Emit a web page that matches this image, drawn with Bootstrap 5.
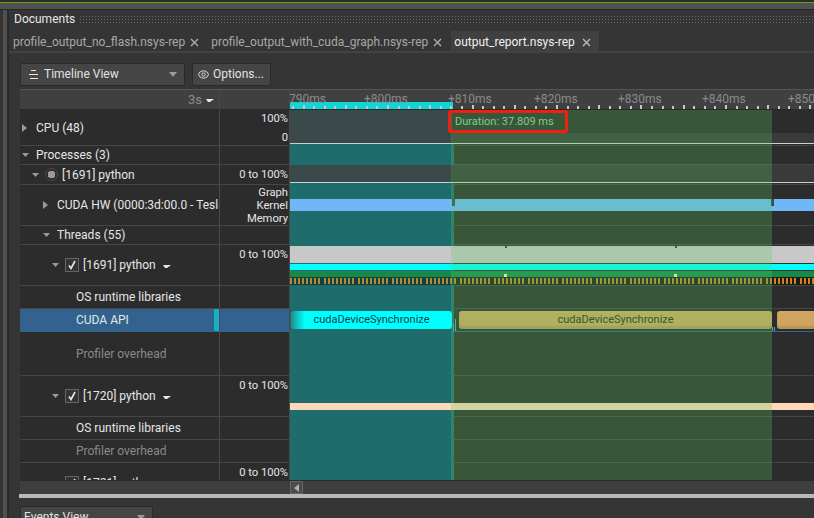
<!DOCTYPE html>
<html lang="en">
<head>
<meta charset="UTF-8">
<title>Timeline View</title>
<link href="https://cdn.jsdelivr.net/npm/bootstrap@5.3.0/dist/css/bootstrap.min.css" rel="stylesheet">
<style>
  html, body { height: 100%; }
  body { background: #353535; color: #e6e6e6; font-family: Roboto, "Liberation Sans", sans-serif; font-size: 12px; line-height: 14px; overflow: hidden; }
  .top-strip { height: 10px; background: #505050; border-top: 2px solid #2c2c2c; border-bottom: 1px solid #262626; position: relative; }
  .top-strip::before { content: ""; display: block; height: 1px; background: #6aa50a; }
  .app-main { height: 508px; overflow: hidden; }
  .left-rail { width: 9px; background: #505050; border-left: 3px solid #333; border-right: 2px solid #2a2a2a; }
  .work-pane { width: 805px; }
  .work-pane > * { flex: none; }
  .doc-title { height: 17px; padding: 0 0 0 5px; }
  .dots { height: 8px; background-image: radial-gradient(circle, #666 .7px, transparent .8px); background-size: 3px 3px; }
  .doc-tabs { height: 22px; margin-top: 4px; padding-left: 4px; border-bottom: 2px solid #424242; flex-wrap: nowrap; }
  .doc-tabs .nav-link { height: 20px; padding: 2px 0 0; color: #a8a8a8; font-size: 12px; display: flex; align-items: center; border: 0; border-radius: 0; white-space: nowrap; }
  .doc-tabs .nav-link.active { background: #404040; color: #f0f0f0; padding-left: 3px; margin-left: -3px; padding-right: 8px; }
  .doc-tabs svg { margin-left: 5px; margin-right: 12px; flex: none; }
  .doc-tabs .active svg { margin-right: 0; margin-left: 7px; }
  .tool-row { height: 36px; padding: 10px 0 0 11px; }
  .dark-btn { height: 23px; padding: 0 7px; background: #454545; border: 1px solid #2a2a2a; border-radius: 2px; color: #e2e2e2; font-size: 12px; line-height: 21px; display: flex; align-items: center; }
  .dark-btn svg { flex: none; }
  .view-combo { width: 165px; }
  .view-combo > svg:first-child { margin-right: 5px; }
  .options-btn { width: 79px; margin-left: 7px; padding: 0 5px; }
  .options-btn svg { margin-right: 4px; }
  .events-combo { width: 133px; height: 23px; margin: 8px 0 0 11px; padding-left: 3px; }
  .tl-wrap { margin-left: 11px; }
  .tl-head { height: 21px; border-top: 1px solid #555; background: #404040; border-bottom: 1px solid #2a2a2a; }
  .c-label { width: 200px; flex: none; border-right: 1px solid #4a4a4a; }
  .c-value { width: 70px; flex: none; border-right: 1px solid #4a4a4a; }
  .c-lane { flex: 1 1 auto; position: relative; overflow: hidden; }
  .ruler { height: 20px; color: #8b8b8b; font-size: 12px; }
  .ruler-tag { position: absolute; top: 2px; white-space: nowrap; }
  .ruler-sel { position: absolute; left: 0; top: 12px; width: 163px; height: 7px; background: #12d6d6; }
  .ruler svg { position: absolute; left: 0; top: 0; }
  .tree { height: 370px; overflow: hidden; position: relative; background: #2a2a2a; }
  .tl-row { border-bottom: 1px solid #464646; }
  .tl-row > .c-label, .tl-row > .c-value { background: #2c2c2c; position: relative; z-index: 5; }
  .tl-row > .c-lane { z-index: 1; background: rgba(255,255,255,.012); }
  .h-19 { height: 19px; } .h-20 { height: 20px; } .h-23 { height: 23px; } .h-36 { height: 36px; } .h-41 { height: 41px; } .h-44 { height: 44px; }
  .c-label { padding-right: 2px; overflow: hidden; white-space: nowrap; display: flex; align-items: center; }
  .c-label.head-3s { color: #8a8a8a; font-size: 13px; padding-right: 5px; justify-content: flex-end; }
  .c-value { padding: 0 1px 0 0; text-align: right; font-size: 11.2px; line-height: 13px; color: #e6e6e6; }
  .val-top { padding-top: 3px; }
  .cpu-vals { padding-top: 2px; }
  .cpu-vals div + div { margin-top: 6px; }
  .in-1 { padding-left: 2px; } .in-2 { padding-left: 12px; } .in-3 { padding-left: 23px; } .in-4 { padding-left: 32px; } .in-leaf { padding-left: 56px; }
  .arrow-box { width: 14px; flex: none; display: flex; }
  .muted-txt { color: #8a8a8a; }
  .radio-dot { width: 13px; height: 13px; border-radius: 50%; border: 1px solid #4c4c4c; background: radial-gradient(circle, #9a9a9a 3.6px, transparent 4px); margin: 0 4px 0 -1px; flex: none; }
  .check-box { width: 14px; height: 14px; border: 1px solid #666; background: #343434; margin: 0 4px 0 -1px; flex: none; display: flex; align-items: center; justify-content: center; }
  .caret-after { margin-left: 7px; }
  .row-picked .c-label, .row-picked .c-value { background: #33628f !important; }
  .row-picked { border-bottom-color: #2f6a8a; }
  .row-mark { position: absolute; left: 194px; top: 0; width: 5px; height: 22px; background: #12afc6; }
  .sel-teal { position: absolute; left: 270px; top: 34px; bottom: 0; width: 164px; background: #1d6b6b; z-index: 0; }
  .sel-green { position: absolute; left: 431px; top: 0; bottom: 0; width: 321px; background: rgba(91,207,98,.266); z-index: 3; }
  .dur-box { position: absolute; left: 428px; top: 0; width: 120px; height: 23px; border: 3px solid #f01f10; border-radius: 2px; z-index: 4; color: #86c98c; font-size: 11px; line-height: 17px; padding-left: 4px; white-space: nowrap; }
  .seg { position: absolute; left: 0; }
  .seg-cpu-l { top: 0; height: 33px; width: 162px; background: #3a4a4b; }
  .seg-cpu-r { top: 23px; height: 10px; right: 0; background: #3a3a3a; }
  .seg-white { top: 33px; height: 1px; right: 0; background: #cfcfcf; }
  .seg-py { top: 0; height: 17px; right: 0; background: #3a3a3a; }
  .seg-py-l { top: 0; height: 17px; width: 162px; background: #3a4a4b; }
  .seg-py-w { top: 17px; height: 1px; right: 0; background: #cfcfcf; }
  .seg-blue { top: 14px; height: 12px; right: 0; background: #6fb7f6; }
  .seg-notch { top: 14px; width: 3px; height: 7px; background: #2e5348; }
  .seg-gray { top: 1px; height: 17px; right: 0; background: #c8c8c8; }
  .seg-cyan { top: 19px; height: 6px; right: 0; background: #00ffff; }
  .seg-green { top: 26px; height: 6px; right: 0; background: #178a47; }
  .seg-tick { top: 1px; left: 215px; width: 2px; height: 2px; background: #3a3a3a; }
  .seg-spot { top: 29px; width: 3px; height: 3px; background: #f2f0c8; }
  .seg-ticks { top: 32px; background: rgba(0,0,0,.4); }
  .seg-peach { top: 27px; height: 7px; right: 0; background: #ffd7ba; }
  .call-box { position: absolute; top: 2px; height: 18px; border-radius: 3px; display: flex; align-items: center; justify-content: center; white-space: nowrap; font-size: 11px; color: #123f4d; overflow: hidden; }
  .call-cyan { left: 1px; width: 161px; background: linear-gradient(90deg, #1e8e8e 0, #00ffff 14px); color: #0b4456; }
  .call-tan { background: #cfa55f; color: #25301c; box-shadow: inset 0 2px 0 rgba(255,255,255,.05), inset 0 -3px 2px rgba(0,0,0,.1); }
  .call-a { left: 169px; width: 313px; }
  .call-b { left: 487px; width: 60px; }
  .spike { position: absolute; width: 1px; bottom: 0; background: #5f98c9; }
  .scroll-row { height: 14px; border-top: 1px solid #2a2a2a; background: #3e3e3e; }
  .scroll-arrow { width: 13px; height: 13px; margin-left: 270px; background: #4a4a4a; border: 1px solid #666; display: flex; align-items: center; justify-content: center; }
  .splitter { height: 4px; background: #b9b9b9; margin-left: 10px; }
</style>
</head>
<body>
<div class="top-strip"></div>
<div class="app-main d-flex">
  <div class="left-rail"></div>
  <div class="work-pane d-flex flex-column">
    <div class="doc-title d-flex align-items-center">
      <span>Documents</span>
      <div class="dots flex-grow-1 ms-1"></div>
    </div>
    <ul class="nav doc-tabs">
      <li class="nav-item"><a class="nav-link" href="#">profile_output_no_flash.nsys-rep<svg width="9" height="9" viewBox="0 0 9 9"><path d="M1 1l7 7M8 1l-7 7" stroke="#b0b0b0" stroke-width="1.3"/></svg></a></li>
      <li class="nav-item"><a class="nav-link" href="#">profile_output_with_cuda_graph.nsys-rep<svg width="9" height="9" viewBox="0 0 9 9"><path d="M1 1l7 7M8 1l-7 7" stroke="#b0b0b0" stroke-width="1.3"/></svg></a></li>
      <li class="nav-item"><a class="nav-link active" href="#">output_report.nsys-rep<svg width="9" height="9" viewBox="0 0 9 9"><path d="M1 1l7 7M8 1l-7 7" stroke="#c0c0c0" stroke-width="1.3"/></svg></a></li>
    </ul>
    <div class="tool-row d-flex">
      <button class="btn dark-btn view-combo" type="button">
        <svg width="11" height="9" viewBox="0 0 11 9"><path d="M3 .5h5M1 4.5h9M2 8.5h8" stroke="#e8e8e8"/></svg>
        <span>Timeline View</span>
        <svg width="8" height="5" viewBox="0 0 8 5" class="ms-auto"><path d="M0 0h8L4 5z" fill="#9a9a9a"/></svg>
      </button>
      <button class="btn dark-btn options-btn" type="button">
        <svg width="11" height="9" viewBox="0 0 11 9"><ellipse cx="5.5" cy="4.5" rx="4.8" ry="3.6" fill="none" stroke="#ddd"/><circle cx="5.5" cy="4.5" r="1.7" fill="none" stroke="#ddd"/></svg>
        <span>Options...</span>
      </button>
    </div>
    <div class="tl-wrap">
      <div class="tl-head d-flex">
        <div class="c-label head-3s">3s<svg class="ms-1" width="8" height="5" viewBox="0 0 8 5"><path d="M0 2h8L4 5H2z" fill="#e8e8e8"/></svg></div>
        <div class="c-value"></div>
        <div class="c-lane ruler" id="ruler">
          <div class="ruler-sel"></div>
          <span class="ruler-tag" style="left:-1px">790ms</span>
          <span class="ruler-tag" style="left:74px">+800ms</span>
          <span class="ruler-tag" style="left:158px">+810ms</span>
          <span class="ruler-tag" style="left:244px">+820ms</span>
          <span class="ruler-tag" style="left:328px">+830ms</span>
          <span class="ruler-tag" style="left:412px">+840ms</span>
          <span class="ruler-tag" style="left:498px">+850ms</span>
          <svg id="rulerTicks" width="524" height="20"></svg>
        </div>
      </div>
      <div class="tree">
        <div class="sel-teal"></div>
        <div class="sel-green"></div>
        <div class="dur-box">Duration: 37.809 ms</div>

        <div class="tl-row h-36 d-flex">
          <div class="c-label in-1"><span class="arrow-box"><svg width="5" height="8" viewBox="0 0 5 8"><path d="M0 0l5 4-5 4z" fill="#9a9a9a"/></svg></span>CPU (48)</div>
          <div class="c-value cpu-vals"><div>100%</div><div>0</div></div>
          <div class="c-lane"><div class="seg seg-cpu-r"></div><div class="seg seg-cpu-l"></div><div class="seg seg-white"></div></div>
        </div>
        <div class="tl-row h-19 d-flex">
          <div class="c-label in-1"><span class="arrow-box"><svg width="7" height="4" viewBox="0 0 7 4"><path d="M0 0h7L3.5 4z" fill="#9a9a9a"/></svg></span>Processes (3)</div>
          <div class="c-value"></div><div class="c-lane"></div>
        </div>
        <div class="tl-row h-20 d-flex">
          <div class="c-label in-2"><span class="arrow-box"><svg width="7" height="4" viewBox="0 0 7 4"><path d="M0 0h7L3.5 4z" fill="#9a9a9a"/></svg></span><span class="radio-dot"></span>[1691] python</div>
          <div class="c-value d-flex align-items-center justify-content-end">0 to 100%</div>
          <div class="c-lane"><div class="seg seg-py"></div><div class="seg seg-py-l"></div><div class="seg seg-py-w"></div></div>
        </div>
        <div class="tl-row h-41 d-flex">
          <div class="c-label in-3"><span class="arrow-box"><svg width="5" height="8" viewBox="0 0 5 8"><path d="M0 0l5 4-5 4z" fill="#9a9a9a"/></svg></span>CUDA HW (0000:3d:00.0 - Tesla</div>
          <div class="c-value d-flex flex-column justify-content-center"><div>Graph</div><div>Kernel</div><div>Memory</div></div>
          <div class="c-lane"><div class="seg seg-blue"></div><div class="seg seg-notch" style="left:162px"></div><div class="seg seg-notch" style="left:481px"></div></div>
        </div>
        <div class="tl-row h-19 d-flex">
          <div class="c-label in-3"><span class="arrow-box"><svg width="7" height="4" viewBox="0 0 7 4"><path d="M0 0h7L3.5 4z" fill="#9a9a9a"/></svg></span>Threads (55)</div>
          <div class="c-value"></div><div class="c-lane"></div>
        </div>
        <div class="tl-row h-41 d-flex">
          <div class="c-label in-4"><span class="arrow-box"><svg width="7" height="4" viewBox="0 0 7 4"><path d="M0 0h7L3.5 4z" fill="#9a9a9a"/></svg></span><span class="check-box"><svg width="10" height="10" viewBox="0 0 10 10"><path d="M2 5.5l2 3L8 1" fill="none" stroke="#e8e8e8" stroke-width="1.6"/></svg></span>[1691] python<svg class="caret-after" width="8" height="5" viewBox="0 0 8 5"><path d="M0 2h8L4 5H2z" fill="#e8e8e8"/></svg></div>
          <div class="c-value val-top">0 to 100%</div>
          <div class="c-lane">
            <div class="seg seg-gray"></div>
            <div class="seg seg-cyan"></div>
            <div class="seg seg-green"></div>
            <div class="seg seg-tick"></div><div class="seg seg-tick" style="left:385px"></div>
            <div class="seg seg-spot" style="left:214px"></div><div class="seg seg-spot" style="left:384px"></div>
            <svg class="seg seg-ticks" id="oranTicks" width="524" height="8"></svg>
          </div>
        </div>
        <div class="tl-row h-23 d-flex">
          <div class="c-label in-leaf">OS runtime libraries</div>
          <div class="c-value"></div><div class="c-lane"></div>
        </div>
        <div class="tl-row row-picked h-23 d-flex">
          <div class="c-label in-leaf">CUDA API<span class="row-mark"></span></div>
          <div class="c-value"></div>
          <div class="c-lane">
            <div class="call-box call-cyan">cudaDeviceSynchronize</div>
            <div class="spike" style="left:163px;height:8px"></div>
            <div class="spike" style="left:165px;height:12px"></div>
            <div class="spike" style="left:482px;height:4px"></div>
            <div class="spike" style="left:484px;height:4px"></div>
            <div class="call-box call-tan call-a">cudaDeviceSynchronize</div>
            <div class="call-box call-tan call-b"></div>
          </div>
        </div>
        <div class="tl-row h-44 d-flex">
          <div class="c-label in-leaf muted-txt">Profiler overhead</div>
          <div class="c-value"></div><div class="c-lane"></div>
        </div>
        <div class="tl-row h-41 d-flex">
          <div class="c-label in-4"><span class="arrow-box"><svg width="7" height="4" viewBox="0 0 7 4"><path d="M0 0h7L3.5 4z" fill="#9a9a9a"/></svg></span><span class="check-box"><svg width="10" height="10" viewBox="0 0 10 10"><path d="M2 5.5l2 3L8 1" fill="none" stroke="#e8e8e8" stroke-width="1.6"/></svg></span>[1720] python<svg class="caret-after" width="8" height="5" viewBox="0 0 8 5"><path d="M0 2h8L4 5H2z" fill="#e8e8e8"/></svg></div>
          <div class="c-value val-top">0 to 100%</div>
          <div class="c-lane"><div class="seg seg-peach"></div></div>
        </div>
        <div class="tl-row h-23 d-flex">
          <div class="c-label in-leaf">OS runtime libraries</div>
          <div class="c-value"></div><div class="c-lane"></div>
        </div>
        <div class="tl-row h-23 d-flex">
          <div class="c-label in-leaf muted-txt">Profiler overhead</div>
          <div class="c-value"></div><div class="c-lane"></div>
        </div>
        <div class="tl-row h-41 d-flex">
          <div class="c-label in-4"><span class="arrow-box"><svg width="7" height="4" viewBox="0 0 7 4"><path d="M0 0h7L3.5 4z" fill="#9a9a9a"/></svg></span><span class="check-box"><svg width="10" height="10" viewBox="0 0 10 10"><path d="M2 5.5l2 3L8 1" fill="none" stroke="#e8e8e8" stroke-width="1.6"/></svg></span>[1721] python<svg class="caret-after" width="8" height="5" viewBox="0 0 8 5"><path d="M0 2h8L4 5H2z" fill="#e8e8e8"/></svg></div>
          <div class="c-value val-top">0 to 100%</div>
          <div class="c-lane"></div>
        </div>
      </div>
      <div class="scroll-row"><div class="scroll-arrow"><svg width="5" height="8" viewBox="0 0 5 8"><path d="M5 0L0 4l5 4z" fill="#b0b0b0"/></svg></div></div>
    </div>
    <div class="splitter"></div>
    <button class="btn dark-btn events-combo" type="button">
      <span>Events View</span>
      <svg width="8" height="5" viewBox="0 0 8 5" class="ms-auto"><path d="M0 0h8L4 5z" fill="#9a9a9a"/></svg>
    </button>
  </div>
</div>
<script src="https://cdn.jsdelivr.net/npm/bootstrap@5.3.0/dist/js/bootstrap.bundle.min.js"></script>
<script>
  // ruler ticks: every 4th one is taller
  const NS = "http://www.w3.org/2000/svg";
  function addRect(svg, x, y, w, h, fill) {
    const r = document.createElementNS(NS, "rect");
    r.setAttribute("x", x); r.setAttribute("y", y);
    r.setAttribute("width", w); r.setAttribute("height", h);
    r.setAttribute("fill", fill);
    svg.appendChild(r);
  }
  const ruler = document.getElementById("rulerTicks");
  for (let k = 0; k < 52; k++) {
    const x = Math.round(2 + k * 10.56);
    const big = (k + 3) % 4 === 0;
    addRect(ruler, x, big ? 15 : 16, 2, big ? 4 : 3, "#c8c8c8");
  }
  // sampled events, grouped with a small gap every few samples
  const oran = document.getElementById("oranTicks");
  let x = 0, n = 0;
  while (x < 524) {
    const past = x > 482;
    addRect(oran, x + .2, 1, 1.6, 6, past ? "#ff9d1e" : "#dca02c");
    n++;
    x += (n % 8 === 0) ? 6 : 4;
  }
</script>
</body>
</html>
